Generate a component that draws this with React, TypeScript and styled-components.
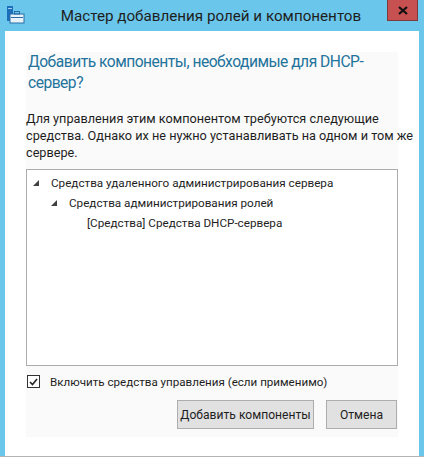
import styled, { createGlobalStyle } from "styled-components";

interface TreeItem {
  id: number;
  label: string;
  level: number;
  expanded?: boolean;
}

const items: TreeItem[] = [
  { id: 1, label: "Средства удаленного администрирования сервера", level: 0, expanded: true },
  { id: 2, label: "Средства администрирования ролей", level: 1, expanded: true },
  { id: 3, label: "[Средства] Средства DHCP-сервера", level: 2 },
];

const FONT = `Roboto, "Noto Sans", sans-serif`;

const GlobalStyle = createGlobalStyle`
  html, body {
    margin: 0;
    padding: 0;
    background: #ffffff;
  }
  body {
    font-family: ${FONT};
  }
`;

const Window = styled.div`
  width: 424px;
  height: 457px;
  box-sizing: border-box;
  background: #6bc6eb;
  padding: 0 5px;
  display: flex;
  flex-direction: column;
  border-bottom: 1px solid #b4b4b4;
  overflow: hidden;
`;

const TitleBar = styled.div`
  height: 31px;
  flex-shrink: 0;
  display: flex;
  align-items: flex-start;
`;

const AppIcon = styled.div`
  width: 18px;
  height: 18px;
  margin: 6px 0 0 2px;
`;

const Caption = styled.div`
  flex: 1;
  text-align: center;
  font-size: 15.2px;
  line-height: 20px;
  padding-top: 6px;
  padding-left: 10px;
  color: #1e1e1e;
  white-space: nowrap;
`;

const CloseButton = styled.div`
  width: 31px;
  height: 21px;
  margin-right: 1px;
  box-sizing: border-box;
  background: #c75050;
  border: 1px solid #7d3a3a;
  border-top: none;
  display: flex;
  align-items: center;
  justify-content: center;
`;

const Client = styled.div`
  flex: 1;
  min-height: 0;
  min-width: 0;
  background: #ffffff;
  padding: 21px 21px 19px 21px;
  display: flex;
  overflow: hidden;
`;

const Panel = styled.div`
  flex: 1;
  min-width: 0;
  background: #fafafa;
  display: flex;
  flex-direction: column;
`;

const Heading = styled.h1`
  margin: 0 0 16px 2px;
  font-weight: normal;
  font-size: 15.6px;
  letter-spacing: -0.5px;
  line-height: 21px;
  color: #22739c;
  white-space: nowrap;
`;

const Description = styled.p`
  margin: 0 0 8px 0;
  font-size: 12.7px;
  line-height: 17px;
  color: #1e1e1e;
  white-space: nowrap;
`;

const TreeBox = styled.div`
  flex: 1;
  min-height: 0;
  box-sizing: border-box;
  border: 1px solid #acacac;
  background: #ffffff;
  padding-top: 3px;
`;

const Row = styled.div<{ $level: number }>`
  height: 20px;
  display: flex;
  align-items: center;
  padding-left: ${(p) => 6 + p.$level * 18}px;
  font-size: 11.7px;
  color: #1e1e1e;
  white-space: nowrap;
`;

const Toggle = styled.span`
  width: 18px;
  height: 20px;
  flex-shrink: 0;
  display: flex;
  align-items: center;
`;

const CheckRow = styled.label`
  display: flex;
  align-items: center;
  height: 15px;
  margin-top: 8px;
  padding-left: 1px;
  font-size: 11.6px;
  color: #1e1e1e;
  white-space: nowrap;
`;

const CheckBox = styled.span`
  width: 13px;
  height: 13px;
  box-sizing: border-box;
  border: 1px solid #333333;
  background: #ffffff;
  display: flex;
  align-items: center;
  justify-content: center;
  margin-right: 10px;
`;

const Buttons = styled.div`
  display: flex;
  justify-content: flex-end;
  gap: 12px;
  margin-top: 11px;
  margin-bottom: 8px;
  padding-right: 1px;
`;

const Button = styled.button<{ $width: number }>`
  width: ${(p) => p.$width}px;
  height: 29px;
  background: #e1e1e1;
  border: 1px solid #adadad;
  font-family: ${FONT};
  font-size: 12.1px;
  color: #1e1e1e;
  padding: 0;
`;

const Triangle = () => (
  <svg width="6" height="6" viewBox="0 0 6 6">
    <polygon points="6,0 6,6 0,6" fill="#404040" />
  </svg>
);

export default function App() {
  return (
    <>
      <GlobalStyle />
      <Window>
        <TitleBar>
          <AppIcon>
            <svg width="18" height="18" viewBox="0 0 18 18">
              <rect x="0" y="0" width="6" height="15" fill="#1c6fb8" />
              <rect x="1" y="2" width="4" height="1" fill="#9fd0f0" />
              <rect x="3" y="8" width="14" height="9" fill="#e8f2fa" stroke="#2a6ea8" strokeWidth="1" />
              <rect x="7.5" y="5.5" width="5" height="2.5" fill="none" stroke="#2a6ea8" strokeWidth="1" />
              <rect x="4" y="11" width="12" height="1" fill="#2a6ea8" />
            </svg>
          </AppIcon>
          <Caption>Мастер добавления ролей и компонентов</Caption>
          <CloseButton>
            <svg width="10" height="9" viewBox="0 0 10 9">
              <path d="M1 1 L9 8 M9 1 L1 8" stroke="#111" strokeWidth="2.2" />
            </svg>
          </CloseButton>
        </TitleBar>
        <Client>
          <Panel>
            <Heading>
              Добавить компоненты, необходимые для DHCP-
              <br />
              сервер?
            </Heading>
            <Description>
              Для управления этим компонентом требуются следующие
              <br />
              средства. Однако их не нужно устанавливать на одном и том же
              <br />
              сервере.
            </Description>
            <TreeBox>
              {items.map((item) => (
                <Row key={item.id} $level={item.level}>
                  <Toggle>{item.expanded ? <Triangle /> : null}</Toggle>
                  {item.label}
                </Row>
              ))}
            </TreeBox>
            <CheckRow>
              <CheckBox>
                <svg width="9" height="8" viewBox="0 0 9 8">
                  <path d="M1 4 L3.5 6.5 L8 1" fill="none" stroke="#222" strokeWidth="1.6" />
                </svg>
              </CheckBox>
              Включить средства управления (если применимо)
            </CheckRow>
            <Buttons>
              <Button $width={137}>Добавить компоненты</Button>
              <Button $width={71}>Отмена</Button>
            </Buttons>
          </Panel>
        </Client>
      </Window>
    </>
  );
}
